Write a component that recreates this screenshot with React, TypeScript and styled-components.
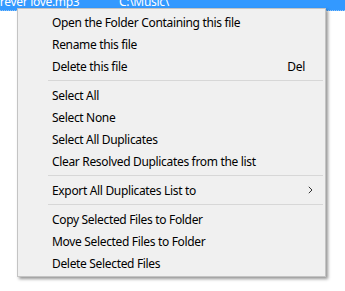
import React from "react";
import styled, { createGlobalStyle } from "styled-components";

const Global = createGlobalStyle`
  html, body { margin: 0; padding: 0; background: #ffffff; }
  body { font-family: "Noto Sans", "Open Sans", sans-serif; font-size: 12px; color: #000; }
`;

const Page = styled.div`
  position: relative;
  width: 345px;
  height: 291px;
  overflow: hidden;
  background: #ffffff;
`;

const SelectedRow = styled.div`
  display: flex;
  align-items: flex-end;
  height: 11px;
  overflow: hidden;
  background: #3399ff;
  color: #ffffff;
  border-bottom: 1px dotted #8fc3f7;
  box-sizing: border-box;
  letter-spacing: -0.3px;
`;

const Cell = styled.div<{ $w?: number; $indent?: number }>`
  flex: ${(p) => (p.$w ? `0 0 ${p.$w}px` : "1")};
  line-height: 16px;
  white-space: nowrap;
  overflow: hidden;
  text-indent: ${(p) => p.$indent ?? 0}px;
`;

const Menu = styled.div`
  position: absolute;
  left: 17px;
  top: 8px;
  width: 309px;
  box-sizing: border-box;
  padding: 2px;
  background: #f0f0f0;
  border: 1px solid #c4c4c4;
  box-shadow: 2px 2px 3px rgba(0, 0, 0, 0.42);
  display: flex;
  flex-direction: column;
`;

const Item = styled.div`
  display: flex;
  align-items: center;
  height: 22px;
  padding-left: 32px;
  padding-right: 10px;
  color: #000;
  white-space: nowrap;
  letter-spacing: -0.33px;
`;

const Label = styled.span`
  flex: 1;
`;

const Shortcut = styled.span`
  margin-right: 8px;
`;

const Separator = styled.div`
  height: 7px;
  display: flex;
  align-items: center;
  padding-left: 28px;
  &::after {
    content: "";
    flex: 1;
    height: 1px;
    background: #d7d7d7;
  }
`;

const Arrow = () => (
  <svg width="5" height="8" viewBox="0 0 5 8">
    <path d="M0.8 0.8 L4 4 L0.8 7.2" fill="none" stroke="#333" strokeWidth="1" />
  </svg>
);

type Entry =
  | { kind: "item"; label: string; shortcut?: string; submenu?: boolean }
  | { kind: "sep" };

const entries: Entry[] = [
  { kind: "item", label: "Open the Folder Containing this file" },
  { kind: "item", label: "Rename this file" },
  { kind: "item", label: "Delete this file", shortcut: "Del" },
  { kind: "sep" },
  { kind: "item", label: "Select All" },
  { kind: "item", label: "Select None" },
  { kind: "item", label: "Select All Duplicates" },
  { kind: "item", label: "Clear Resolved Duplicates from the list" },
  { kind: "sep" },
  { kind: "item", label: "Export All Duplicates List to", submenu: true },
  { kind: "sep" },
  { kind: "item", label: "Copy Selected Files to Folder" },
  { kind: "item", label: "Move Selected Files to Folder" },
  { kind: "item", label: "Delete Selected Files" },
];

export default function App() {
  return (
    <>
      <Global />
      <Page>
        <SelectedRow>
          <Cell $w={119} $indent={-11}>forever love.mp3</Cell>
          <Cell>C:\Music\</Cell>
        </SelectedRow>
        <Menu>
          {entries.map((e, i) =>
            e.kind === "sep" ? (
              <Separator key={i} />
            ) : (
              <Item key={i}>
                <Label>{e.label}</Label>
                {e.shortcut && <Shortcut>{e.shortcut}</Shortcut>}
                {e.submenu && <Arrow />}
              </Item>
            )
          )}
        </Menu>
      </Page>
    </>
  );
}
